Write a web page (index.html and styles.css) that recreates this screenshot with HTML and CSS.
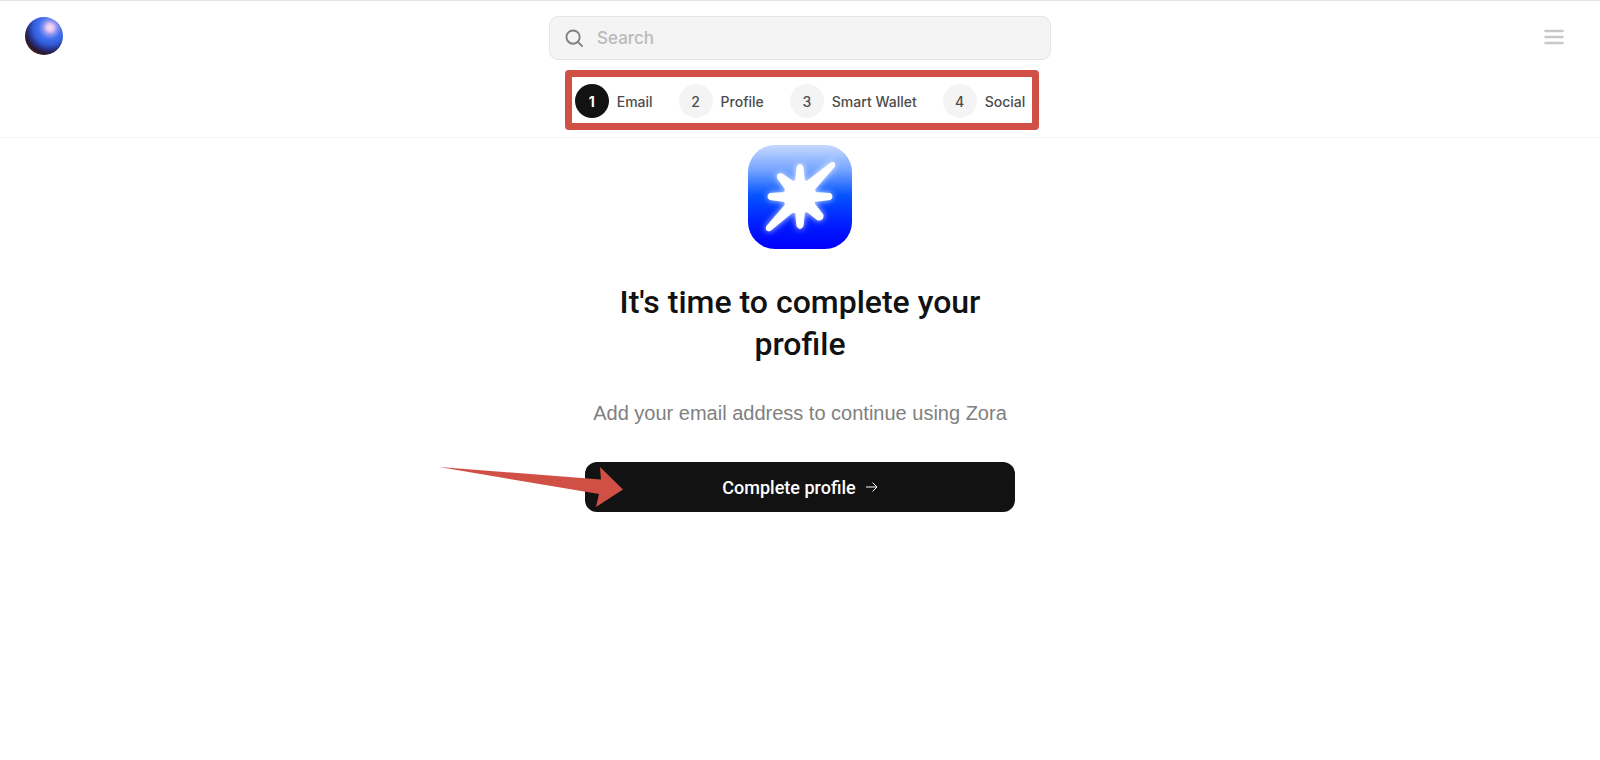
FILE: index.html
```html
<!DOCTYPE html>
<html lang="en">
<head>
  <meta charset="UTF-8">
  <meta name="viewport" content="width=device-width, initial-scale=1.0">
  <title>Zora</title>
  <link rel="stylesheet" href="styles.css">
</head>
<body>
  <header class="header">
    <div class="topbar">
      <a class="logo" href="#" aria-label="Zora"></a>

      <form class="search">
        <svg class="search-icon" viewBox="0 0 20 20" aria-hidden="true">
          <circle cx="8.5" cy="8.5" r="7"/>
          <path d="M13.6 13.6 18.5 18.5"/>
        </svg>
        <input type="text" id="search" placeholder="Search" aria-label="Search">
      </form>

      <button class="menu" type="button" aria-label="Menu">
        <svg viewBox="0 0 20 16" aria-hidden="true">
          <path d="M1.5 2h17M1.5 8h17M1.5 14h17"/>
        </svg>
      </button>
    </div>

    <!-- Onboarding steps -->
    <ol class="steps">
      <li class="step active"><span class="num">1</span>Email</li>
      <li class="step"><span class="num">2</span>Profile</li>
      <li class="step"><span class="num">3</span>Smart Wallet</li>
      <li class="step"><span class="num">4</span>Social</li>
    </ol>
  </header>

  <main class="content">
    <svg class="badge" viewBox="0 0 104 104" aria-hidden="true">
      <defs>
        <linearGradient id="sky" x1="0" y1="0" x2="0" y2="1">
          <stop offset="0" stop-color="#c6d9ff"/>
          <stop offset="0.25" stop-color="#71a1ff"/>
          <stop offset="0.48" stop-color="#0655ff"/>
          <stop offset="0.75" stop-color="#001fff"/>
          <stop offset="1" stop-color="#0000fa"/>
        </linearGradient>
        <filter id="glow" x="-30%" y="-30%" width="160%" height="160%">
          <feGaussianBlur stdDeviation="3"/>
        </filter>
        <path id="star" d="M49.5 22 Q52 18 54.5 22 L56 36 L59 37 L83 18.5 Q87 17 86 21 L66 44 L67 48 L82 49 Q85 51.5 82 54 L66 56 L66 59 L74.5 70 Q75 75 70 74.5 L59 66 L56 67 L54.5 81 Q52 85 49.5 81 L48 67 L44 67 L22 85 Q18 86 19 82 L38 60 L37 56 L22 54 Q19 51.5 22 49 L37 48 L38 44 L30 33 Q29 28 34 29.5 L45 37 L48 36 Z"/>
      </defs>
      <rect width="104" height="104" rx="27" fill="url(#sky)"/>
      <use href="#star" fill="#fff" stroke="#fff" stroke-width="2" opacity="0.8" filter="url(#glow)"/>
      <use href="#star" fill="#fff" stroke="#fff" stroke-width="2" stroke-linejoin="round"/>
    </svg>

    <h1>It's time to complete your profile</h1>
    <p class="lead">Add your email address to continue using Zora</p>

    <div class="action">
      <button class="submit" type="button">
        Complete profile
        <svg viewBox="0 0 12 12" aria-hidden="true">
          <path d="M0 6h11M6.5 1.5 11 6l-4.5 4.5"/>
        </svg>
      </button>
      <svg class="pointer" viewBox="0 0 184 40" aria-hidden="true">
        <path d="M0 0 162 12.5 161 0 184 22.5 157 40 160 27Z"/>
      </svg>
    </div>
  </main>
</body>
</html>
```
FILE: styles.css
```css
* { margin: 0; padding: 0; box-sizing: border-box; }
body { background: #fff; color: #121212; border-top: 1px solid #e5e5e5; font-family: Roboto, "Liberation Sans", sans-serif; }
button, input { font-family: inherit; border: none; background: none; }

/* Header */
.header { padding: 15px 25px 19px; border-bottom: 1px solid #f4f4f4; }
.topbar { display: grid; grid-template-columns: 1fr minmax(0, 502px) 1fr; align-items: center; }
.logo {
  width: 38px;
  height: 38px;
  margin-bottom: 4px;
  border-radius: 50%;
  background: radial-gradient(circle at 66% 28%, #fbdff0 0, #e6c8ef 9%, #8a94ee 19%, #3f70ee 31%, #315bd8 46%, #25307f 60%, #2b1730 71%, #4a2320 80%, #a5683f 90%);
}
.search { display: flex; align-items: center; gap: 13px; height: 44px; padding: 0 15px; background: #f4f4f4; border: 1px solid #e5e5e5; border-radius: 9px; }
.search-icon { width: 19px; height: 19px; flex: none; fill: none; stroke: #808080; stroke-width: 2; }
.search input { flex: 1; min-width: 0; font-family: Inter, sans-serif; font-size: 17px; font-weight: 500; outline: none; }
.search input::placeholder { color: #bababa; }
.menu { justify-self: end; width: 20px; height: 16px; margin: 0 11px 3px 0; cursor: pointer; }
.menu svg { display: block; fill: none; stroke: #c8c8c8; stroke-width: 2.5; stroke-linecap: round; }

/* Steps */
.steps { position: relative; display: flex; justify-content: center; gap: 26px; width: fit-content; margin: 24px auto 0; list-style: none; }
.steps::after { content: ""; position: absolute; inset: -14px -14px -12px -10px; border: 7px solid #d15045; border-radius: 4px; pointer-events: none; }
.step { display: flex; align-items: center; gap: 8px; font-family: Inter, sans-serif; font-size: 14px; font-weight: 500; color: #4c4c4c; }
.num { display: flex; align-items: center; justify-content: center; width: 34px; height: 34px; border-radius: 50%; background: #f4f4f4; }
.active .num { background: #121212; color: #fff; font-weight: bold; }

/* Content */
.content { display: flex; flex-direction: column; align-items: center; width: 100%; max-width: 430px; margin: 0 auto; padding-top: 7px; text-align: center; }
.badge { width: 104px; height: 104px; }
h1 { margin-top: 32px; font-size: 32px; line-height: 42px; font-weight: 500; }
.lead { margin-top: 34px; font-family: "Liberation Sans", Arial, sans-serif; font-size: 20px; line-height: 28px; color: #808080; white-space: nowrap; }
.action { position: relative; width: 100%; margin-top: 35px; }
.submit { display: flex; align-items: center; justify-content: center; gap: 10px; width: 100%; height: 50px; border-radius: 12px; background: #121212; color: #fff; font-size: 18px; font-weight: 500; cursor: pointer; }
.submit svg { width: 12px; height: 12px; fill: none; stroke: #fff; stroke-width: 1; }
.pointer { position: absolute; left: -146px; top: 5px; width: 184px; height: 40px; fill: #d15045; pointer-events: none; }
```
